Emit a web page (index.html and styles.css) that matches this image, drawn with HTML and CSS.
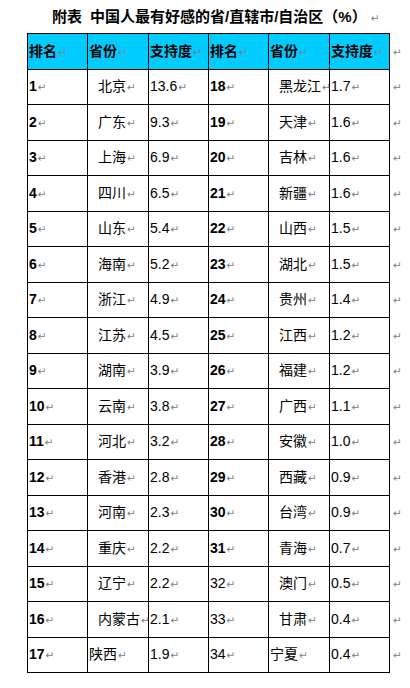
FILE: index.html
```html
<!DOCTYPE html>
<html lang="zh">
<head>
<meta charset="utf-8">
<title>附表</title>
<link rel="stylesheet" href="styles.css">
</head>
<body>
<div class="title"><span class="t1">附表</span><span class="t2">中国人最有好感的省/直辖市/自治区（%）</span><span class="rm">↵</span></div>
<table class="tbl">
<colgroup><col class="c60"><col class="c61"><col class="c60"><col class="c60"><col class="c61"><col class="c60"><col class="cx"></colgroup>
<thead>
<tr><th>排名<span class="rm">↵</span></th><th>省份<span class="rm">↵</span></th><th>支持度<span class="rm">↵</span></th><th>排名<span class="rm">↵</span></th><th>省份<span class="rm">↵</span></th><th>支持度<span class="rm">↵</span></th><td class="end"><span class="rm">↵</span></td></tr>
</thead>
<tbody>
<tr><td class="b">1<span class="rm">↵</span></td><td class="ind">北京<span class="rm">↵</span></td><td>13.6<span class="rm">↵</span></td><td class="b">18<span class="rm">↵</span></td><td class="ind">黑龙江<span class="rm">↵</span></td><td>1.7<span class="rm">↵</span></td><td class="end"><span class="rm">↵</span></td></tr>
<tr><td class="b">2<span class="rm">↵</span></td><td class="ind">广东<span class="rm">↵</span></td><td>9.3<span class="rm">↵</span></td><td class="b">19<span class="rm">↵</span></td><td class="ind">天津<span class="rm">↵</span></td><td>1.6<span class="rm">↵</span></td><td class="end"><span class="rm">↵</span></td></tr>
<tr><td class="b">3<span class="rm">↵</span></td><td class="ind">上海<span class="rm">↵</span></td><td>6.9<span class="rm">↵</span></td><td class="b">20<span class="rm">↵</span></td><td class="ind">吉林<span class="rm">↵</span></td><td>1.6<span class="rm">↵</span></td><td class="end"><span class="rm">↵</span></td></tr>
<tr><td class="b">4<span class="rm">↵</span></td><td class="ind">四川<span class="rm">↵</span></td><td>6.5<span class="rm">↵</span></td><td class="b">21<span class="rm">↵</span></td><td class="ind">新疆<span class="rm">↵</span></td><td>1.6<span class="rm">↵</span></td><td class="end"><span class="rm">↵</span></td></tr>
<tr><td class="b">5<span class="rm">↵</span></td><td class="ind">山东<span class="rm">↵</span></td><td>5.4<span class="rm">↵</span></td><td class="b">22<span class="rm">↵</span></td><td class="ind">山西<span class="rm">↵</span></td><td>1.5<span class="rm">↵</span></td><td class="end"><span class="rm">↵</span></td></tr>
<tr><td class="b">6<span class="rm">↵</span></td><td class="ind">海南<span class="rm">↵</span></td><td>5.2<span class="rm">↵</span></td><td class="b">23<span class="rm">↵</span></td><td class="ind">湖北<span class="rm">↵</span></td><td>1.5<span class="rm">↵</span></td><td class="end"><span class="rm">↵</span></td></tr>
<tr><td class="b">7<span class="rm">↵</span></td><td class="ind">浙江<span class="rm">↵</span></td><td>4.9<span class="rm">↵</span></td><td class="b">24<span class="rm">↵</span></td><td class="ind">贵州<span class="rm">↵</span></td><td>1.4<span class="rm">↵</span></td><td class="end"><span class="rm">↵</span></td></tr>
<tr><td class="b">8<span class="rm">↵</span></td><td class="ind">江苏<span class="rm">↵</span></td><td>4.5<span class="rm">↵</span></td><td class="b">25<span class="rm">↵</span></td><td class="ind">江西<span class="rm">↵</span></td><td>1.2<span class="rm">↵</span></td><td class="end"><span class="rm">↵</span></td></tr>
<tr><td class="b">9<span class="rm">↵</span></td><td class="ind">湖南<span class="rm">↵</span></td><td>3.9<span class="rm">↵</span></td><td class="b">26<span class="rm">↵</span></td><td class="ind">福建<span class="rm">↵</span></td><td>1.2<span class="rm">↵</span></td><td class="end"><span class="rm">↵</span></td></tr>
<tr><td class="b">10<span class="rm">↵</span></td><td class="ind">云南<span class="rm">↵</span></td><td>3.8<span class="rm">↵</span></td><td class="b">27<span class="rm">↵</span></td><td class="ind">广西<span class="rm">↵</span></td><td>1.1<span class="rm">↵</span></td><td class="end"><span class="rm">↵</span></td></tr>
<tr><td class="b">11<span class="rm">↵</span></td><td class="ind">河北<span class="rm">↵</span></td><td>3.2<span class="rm">↵</span></td><td class="b">28<span class="rm">↵</span></td><td class="ind">安徽<span class="rm">↵</span></td><td>1.0<span class="rm">↵</span></td><td class="end"><span class="rm">↵</span></td></tr>
<tr><td class="b">12<span class="rm">↵</span></td><td class="ind">香港<span class="rm">↵</span></td><td>2.8<span class="rm">↵</span></td><td class="b">29<span class="rm">↵</span></td><td class="ind">西藏<span class="rm">↵</span></td><td>0.9<span class="rm">↵</span></td><td class="end"><span class="rm">↵</span></td></tr>
<tr><td class="b">13<span class="rm">↵</span></td><td class="ind">河南<span class="rm">↵</span></td><td>2.3<span class="rm">↵</span></td><td class="b">30<span class="rm">↵</span></td><td class="ind">台湾<span class="rm">↵</span></td><td>0.9<span class="rm">↵</span></td><td class="end"><span class="rm">↵</span></td></tr>
<tr><td class="b">14<span class="rm">↵</span></td><td class="ind">重庆<span class="rm">↵</span></td><td>2.2<span class="rm">↵</span></td><td class="b">31<span class="rm">↵</span></td><td class="ind">青海<span class="rm">↵</span></td><td>0.7<span class="rm">↵</span></td><td class="end"><span class="rm">↵</span></td></tr>
<tr><td class="b">15<span class="rm">↵</span></td><td class="ind">辽宁<span class="rm">↵</span></td><td>2.2<span class="rm">↵</span></td><td>32<span class="rm">↵</span></td><td class="ind">澳门<span class="rm">↵</span></td><td>0.5<span class="rm">↵</span></td><td class="end"><span class="rm">↵</span></td></tr>
<tr><td class="b">16<span class="rm">↵</span></td><td class="ind">内蒙古<span class="rm">↵</span></td><td>2.1<span class="rm">↵</span></td><td>33<span class="rm">↵</span></td><td class="ind">甘肃<span class="rm">↵</span></td><td>0.4<span class="rm">↵</span></td><td class="end"><span class="rm">↵</span></td></tr>
<tr><td class="b">17<span class="rm">↵</span></td><td>陕西<span class="rm">↵</span></td><td>1.9<span class="rm">↵</span></td><td>34<span class="rm">↵</span></td><td>宁夏<span class="rm">↵</span></td><td>0.4<span class="rm">↵</span></td><td class="end"><span class="rm">↵</span></td></tr>
</tbody>
</table>
</body>
</html>
```
FILE: styles.css
```css
html, body {
  margin: 0;
  padding: 0;
  background: #ffffff;
}
body {
  font-family: "Liberation Sans", "Noto Sans CJK SC", sans-serif;
  color: #000000;
  font-size: 14px;
}
.title {
  height: 33px;
  box-sizing: border-box;
  padding-left: 52px;
  padding-top: 6px;
  font-weight: 700;
  font-size: 15px;
  line-height: 21px;
  white-space: nowrap;
}
.t1 {
  margin-right: 8px;
}
.rm {
  font-family: "DejaVu Sans", sans-serif;
  font-weight: 400;
  font-size: 10.5px;
  color: #808080;
  margin-left: 1px;
}
.title .rm {
  margin-left: 4px;
}
.tbl {
  border-collapse: collapse;
  table-layout: fixed;
  margin-left: 27px;
  width: 383px;
}
.c60 { width: 60px; }
.c61 { width: 61px; }
.cx { width: 21px; }
.tbl th,
.tbl td {
  border: 1px solid #000000;
  height: 35.5px;
  box-sizing: border-box;
  padding: 0 0 0 1px;
  text-align: left;
  vertical-align: middle;
  white-space: nowrap;
  overflow: visible;
  line-height: 18px;
  font-weight: 400;
}
.tbl th {
  background: #00ccff;
  font-weight: 700;
  font-size: 14px;
}
.tbl td.b {
  font-weight: 700;
}
.tbl td.ind {
  padding-left: 10px;
}
.tbl td.end {
  border: none;
  padding-left: 2px;
}
```
